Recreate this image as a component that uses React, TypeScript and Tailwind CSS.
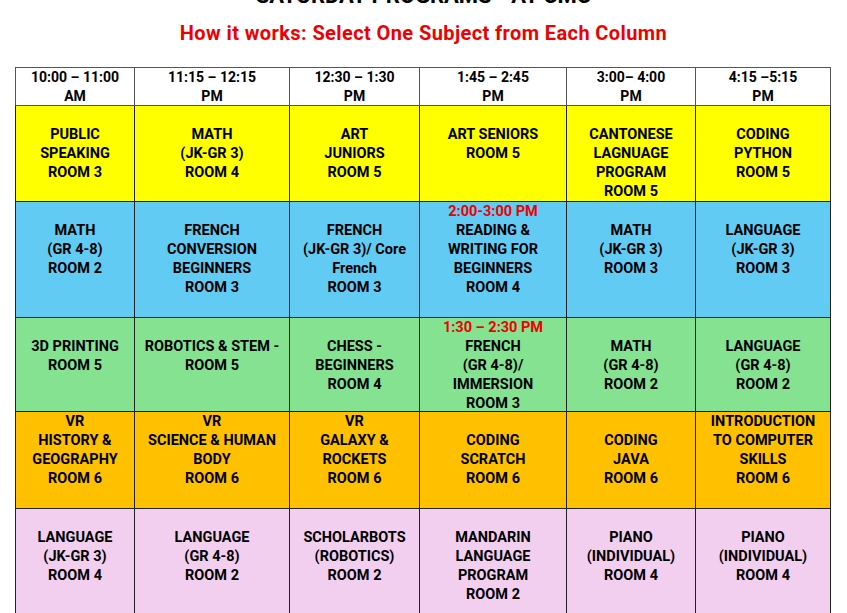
const headers = [
  ['10:00 – 11:00', 'AM'],
  ['11:15 – 12:15', 'PM'],
  ['12:30 – 1:30', 'PM'],
  ['1:45 – 2:45', 'PM'],
  ['3:00– 4:00', 'PM'],
  ['4:15 –5:15', 'PM'],
];

type Cell = { top?: string; red?: boolean; lines: string[] };

const rows: { bg: string; h: string; cells: Cell[] }[] = [
  {
    bg: 'bg-[#ffff00]',
    h: 'h-[95px]',
    cells: [
      { lines: ['PUBLIC', 'SPEAKING', 'ROOM 3'] },
      { lines: ['MATH', '(JK-GR 3)', 'ROOM 4'] },
      { lines: ['ART', 'JUNIORS', 'ROOM 5'] },
      { lines: ['ART SENIORS', 'ROOM 5'] },
      { lines: ['CANTONESE', 'LAGNUAGE', 'PROGRAM', 'ROOM 5'] },
      { lines: ['CODING', 'PYTHON', 'ROOM 5'] },
    ],
  },
  {
    bg: 'bg-[#61cbf3]',
    h: 'h-[115px]',
    cells: [
      { lines: ['MATH', '(GR 4-8)', 'ROOM 2'] },
      { lines: ['FRENCH', 'CONVERSION', 'BEGINNERS', 'ROOM 3'] },
      { lines: ['FRENCH', '(JK-GR 3)/ Core', 'French', 'ROOM 3'] },
      { top: '2:00-3:00 PM', red: true, lines: ['READING &', 'WRITING FOR', 'BEGINNERS', 'ROOM 4'] },
      { lines: ['MATH', '(JK-GR 3)', 'ROOM 3'] },
      { lines: ['LANGUAGE', '(JK-GR 3)', 'ROOM 3'] },
    ],
  },
  {
    bg: 'bg-[#84e291]',
    h: 'h-[93px]',
    cells: [
      { lines: ['3D PRINTING', 'ROOM 5'] },
      { lines: ['ROBOTICS & STEM -', 'ROOM 5'] },
      { lines: ['CHESS -', 'BEGINNERS', 'ROOM 4'] },
      { top: '1:30 – 2:30 PM', red: true, lines: ['FRENCH', '(GR 4-8)/', 'IMMERSION', 'ROOM 3'] },
      { lines: ['MATH', '(GR 4-8)', 'ROOM 2'] },
      { lines: ['LANGUAGE', '(GR 4-8)', 'ROOM 2'] },
    ],
  },
  {
    bg: 'bg-[#ffc000]',
    h: 'h-[96px]',
    cells: [
      { top: 'VR', lines: ['HISTORY &', 'GEOGRAPHY', 'ROOM 6'] },
      { top: 'VR', lines: ['SCIENCE & HUMAN', 'BODY', 'ROOM 6'] },
      { top: 'VR', lines: ['GALAXY &', 'ROCKETS', 'ROOM 6'] },
      { lines: ['CODING', 'SCRATCH', 'ROOM 6'] },
      { lines: ['CODING', 'JAVA', 'ROOM 6'] },
      { top: 'INTRODUCTION', lines: ['TO COMPUTER', 'SKILLS', 'ROOM 6'] },
    ],
  },
  {
    bg: 'bg-[#f2ceef]',
    h: 'h-[120px]',
    cells: [
      { lines: ['LANGUAGE', '(JK-GR 3)', 'ROOM 4'] },
      { lines: ['LANGUAGE', '(GR 4-8)', 'ROOM 2'] },
      { lines: ['SCHOLARBOTS', '(ROBOTICS)', 'ROOM 2'] },
      { lines: ['MANDARIN', 'LANGUAGE', 'PROGRAM', 'ROOM 2'] },
      { lines: ['PIANO', '(INDIVIDUAL)', 'ROOM 4'] },
      { lines: ['PIANO', '(INDIVIDUAL)', 'ROOM 4'] },
    ],
  },
];

const widths = ['w-[119px]', 'w-[155px]', 'w-[130px]', 'w-[147px]', 'w-[129px]', 'w-[135px]'];

export default function App() {
  return (
    <div className="h-[613px] w-[847px] overflow-hidden bg-white font-['Roboto',sans-serif] text-black">
      <h1 className="mt-[-15px] text-center text-[22px] leading-[22px] font-bold">
        SATURDAY PROGRAMS - AT CMC
      </h1>
      <h2 className="mt-[14px] text-center text-[20px] leading-[24px] font-bold tracking-[0.4px] text-[#ee0000]">
        How it works: Select One Subject from Each Column
      </h2>

      <table className="mt-[22px] ml-[15px] w-[815px] table-fixed border-collapse border border-[#777]">
        <colgroup>
          {widths.map((w) => (
            <col key={w} className={w} />
          ))}
        </colgroup>
        <thead>
          <tr className="bg-white">
            {headers.map(([a, b]) => (
              <th key={a} className="border border-[#555] p-0 align-top text-[14px] leading-[19px] font-bold">
                <div className="h-[37px] pt-[0px]">
                  <div>{a}</div>
                  <div>{b}</div>
                </div>
              </th>
            ))}
          </tr>
        </thead>
        <tbody>
          {rows.map((row, ri) => (
            <tr key={ri} className={row.bg}>
              {row.cells.map((cell, ci) => (
                <td
                  key={ci}
                  className="border border-[#222] p-0 text-center align-top text-[14.5px] leading-[19px] font-bold"
                >
                  <div className={row.h}>
                    <div className={cell.red ? 'text-[#ee0000]' : ''}>{cell.top ?? '\u00a0'}</div>
                    {cell.lines.map((l, li) => (
                      <div key={li}>{l}</div>
                    ))}
                  </div>
                </td>
              ))}
            </tr>
          ))}
        </tbody>
      </table>
    </div>
  );
}
